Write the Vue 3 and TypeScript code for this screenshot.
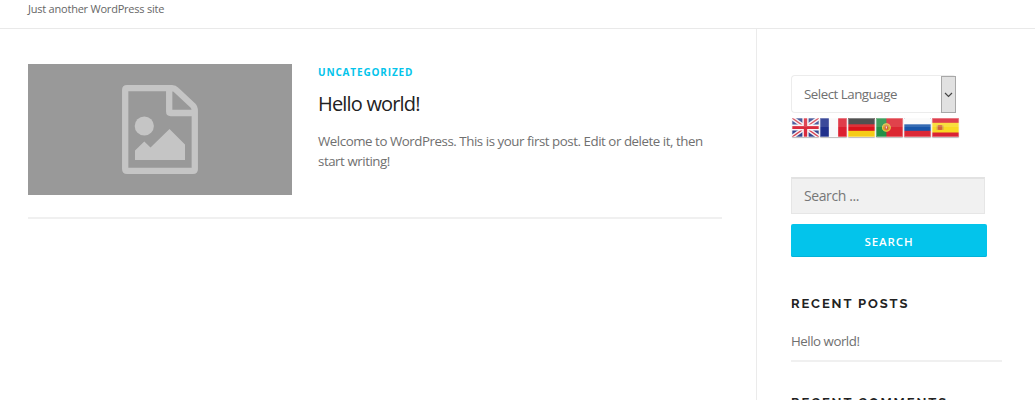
<script setup lang="ts">
interface Flag {
  code: string
  label: string
}

const flags: Flag[] = [
  { code: 'gb', label: 'English' },
  { code: 'fr', label: 'French' },
  { code: 'de', label: 'German' },
  { code: 'pt', label: 'Portuguese' },
  { code: 'ru', label: 'Russian' },
  { code: 'es', label: 'Spanish' },
]
</script>

<template>
  <div class="page">
    <header class="site-header">
      <p class="tagline">Just another WordPress site</p>
    </header>
    <div class="content">
      <main class="primary">
        <article class="post">
          <div class="thumb">
            <svg class="thumb-icon" width="76" height="89" viewBox="0 0 76 89">
              <path
                fill="none"
                stroke="#c5c5c5"
                stroke-width="6.3"
                stroke-linejoin="round"
                d="M5 3.2H50Q52.5 3.2 54.5 5.2L70.8 20.5Q72.8 22.5 72.8 26V84Q72.8 85.8 71 85.8H5Q3.2 85.8 3.2 84V5Q3.2 3.2 5 3.2ZM47.2 3.5V26.5Q47.2 28 48.7 28H72"
              />
              <circle cx="22.3" cy="41" r="9.6" fill="#c5c5c5" />
              <path fill="#c5c5c5" d="M13 75V65.5L22.3 56.5L28.5 62.5L47.5 44L63 59.5V75Z" />
            </svg>
          </div>
          <div class="entry">
            <a class="category">UNCATEGORIZED</a>
            <h2 class="title">Hello world!</h2>
            <p class="excerpt">
              <span class="line">Welcome to WordPress. This is your first post. Edit or delete it, then</span>
              <span class="line">start writing!</span>
            </p>
          </div>
        </article>
      </main>
      <aside class="sidebar">
        <div class="language">
          <span class="language-label">Select Language</span>
          <span class="language-arrow">
            <svg width="9" height="6" viewBox="0 0 9 6">
              <path d="M1 1L4.5 4.5L8 1" fill="none" stroke="#444" stroke-width="1.2" />
            </svg>
          </span>
        </div>
        <div class="flags">
          <svg
            v-for="flag in flags"
            :key="flag.code"
            class="flag"
            width="27"
            height="19"
            viewBox="0 0 26 19"
            preserveAspectRatio="none"
            role="img"
            :aria-label="flag.label"
          >
            <template v-if="flag.code === 'gb'">
              <rect width="26" height="19" fill="#33458f" />
              <path d="M0 0L26 19M26 0L0 19" stroke="#f3eff3" stroke-width="4.2" />
              <path d="M0 0L26 19M26 0L0 19" stroke="#d8414f" stroke-width="1.4" />
              <path d="M13 0V19M0 9.5H26" stroke="#f8f4f6" stroke-width="6" />
              <path d="M13 0V19M0 9.5H26" stroke="#d92b3c" stroke-width="3.2" />
            </template>
            <template v-else-if="flag.code === 'fr'">
              <rect width="26" height="19" fill="#f8f8fa" />
              <rect width="8.5" height="19" fill="#20308c" />
              <rect x="17.5" width="8.5" height="19" fill="#dc1f30" />
            </template>
            <template v-else-if="flag.code === 'de'">
              <rect width="26" height="19" fill="#f5cc16" />
              <rect width="26" height="12.8" fill="#d9141c" />
              <rect width="26" height="6.3" fill="#383838" />
            </template>
            <template v-else-if="flag.code === 'pt'">
              <rect width="26" height="19" fill="#dc2631" />
              <rect width="10" height="19" fill="#239047" />
              <circle cx="10" cy="9.5" r="3.8" fill="#d3a22b" stroke="#e9c84c" stroke-width="1" />
              <rect x="8.5" y="7.7" width="3" height="3.8" fill="#d94d40" />
              <rect x="9.4" y="8.5" width="1.2" height="2" fill="#e9e0dc" />
            </template>
            <template v-else-if="flag.code === 'ru'">
              <rect width="26" height="19" fill="#dc2836" />
              <rect width="26" height="12.8" fill="#1755a8" />
              <rect width="26" height="6.3" fill="#fafafa" />
            </template>
            <template v-else>
              <rect width="26" height="19" fill="#d92334" />
              <rect y="4.8" width="26" height="9.7" fill="#f9d923" />
              <rect x="5.5" y="7" width="4.5" height="5" rx="1" fill="#d46438" />
              <path d="M5 7.5V12M10.5 7.5V12" stroke="#c99a5c" stroke-width="1" />
            </template>
            <rect width="26" height="9" fill="#fff" opacity="0.13" />
            <rect x="0.5" y="0.5" width="25" height="18" fill="none" stroke="#fff" opacity="0.3" />
          </svg>
        </div>
        <form class="search" @submit.prevent>
          <input class="search-field" type="text" placeholder="Search ..." aria-label="Search" />
          <button class="search-button" type="submit">SEARCH</button>
        </form>
        <section class="widget">
          <h3 class="widget-title">RECENT POSTS</h3>
          <a class="recent-link">Hello world!</a>
        </section>
        <section class="widget comments">
          <h3 class="widget-title">RECENT COMMENTS</h3>
        </section>
      </aside>
    </div>
  </div>
</template>

<style>
body {
  margin: 0;
  background: #fff;
}
</style>

<style scoped>
.page {
  display: flex;
  flex-direction: column;
  width: 1035px;
  height: 400px;
  overflow: hidden;
  background: #fff;
  color: #707070;
  font-family: 'Open Sans', 'Noto Sans', sans-serif;
}
.site-header {
  box-sizing: border-box;
  flex: none;
  height: 29px;
  border-bottom: 1px solid #e9e9e9;
}
.tagline {
  margin: 0;
  padding-left: 28px;
  font-size: 11px;
  line-height: 18px;
  letter-spacing: -0.22px;
  color: #666;
}
.content {
  display: flex;
  flex: 1;
  min-height: 0;
}
.primary {
  box-sizing: border-box;
  width: 756px;
  padding: 35px 34px 0 28px;
}
.post {
  display: flex;
  box-sizing: border-box;
  height: 155px;
  border-bottom: 2px solid #f0f0f0;
}
.thumb {
  display: flex;
  flex: none;
  align-items: center;
  justify-content: center;
  width: 264px;
  height: 131px;
  background: #999;
}
.thumb-icon {
  display: block;
}
.entry {
  margin-left: 26px;
  white-space: nowrap;
}
.category {
  display: block;
  font-size: 10px;
  font-weight: 700;
  line-height: 16px;
  letter-spacing: 0.85px;
  color: #03c4eb;
}
.title {
  margin: 8px 0 0;
  font-size: 20px;
  font-weight: 400;
  line-height: 32px;
  letter-spacing: -0.82px;
  color: #222;
}
.excerpt {
  margin: 11px 0 0;
  font-size: 13.3px;
  line-height: 20px;
  letter-spacing: -0.45px;
}
.line {
  display: block;
}
.sidebar {
  box-sizing: border-box;
  width: 279px;
  padding: 46px 33px 0 34px;
  border-left: 1px solid #ebebeb;
}
.language {
  display: flex;
  justify-content: space-between;
  box-sizing: border-box;
  width: 165px;
  height: 38px;
  border: 1px solid #ececec;
  border-right: 0;
  border-radius: 4px;
}
.language-label {
  padding-left: 12px;
  font-size: 13.3px;
  line-height: 36px;
  letter-spacing: -0.48px;
}
.language-arrow {
  display: flex;
  align-items: center;
  justify-content: center;
  box-sizing: border-box;
  width: 15px;
  height: 37px;
  border: 1px solid #a8a8a8;
  background: #e1e1e1;
}
.flags {
  display: flex;
  gap: 1px;
  margin: 5px 0 0 1px;
}
.flag {
  display: block;
  border-radius: 1px;
  box-shadow: 0 1px 1px #bbb;
}
.search {
  display: flex;
  flex-direction: column;
  margin-top: 40px;
}
.search-field {
  box-sizing: border-box;
  width: 194px;
  height: 37px;
  margin: 0;
  padding: 0 12px 2px;
  border: 1px solid #e6e6e6;
  border-top: 2px solid #e2e2e2;
  border-radius: 0;
  background: #f1f1f1;
  color: #777;
  font-family: inherit;
  font-size: 14px;
  letter-spacing: -0.4px;
}
.search-field::placeholder {
  color: #777;
  opacity: 1;
}
.search-button {
  width: 196px;
  height: 33px;
  margin: 10px 0 0;
  padding: 0;
  border: 0;
  border-radius: 2px;
  background: #03c4eb;
  box-shadow: inset 0 -1px 0 #03b2d8;
  color: #fff;
  font-family: inherit;
  font-size: 11.5px;
  font-weight: 600;
  line-height: 35px;
  letter-spacing: 0.9px;
}
.widget {
  margin-top: 37px;
}
.widget-title {
  margin: 0;
  font-family: Raleway, 'Open Sans', sans-serif;
  font-size: 13px;
  font-weight: 700;
  line-height: 20px;
  letter-spacing: 1.9px;
  white-space: nowrap;
  color: #222;
}
.comments {
  margin-top: 31px;
}
.recent-link {
  display: block;
  box-sizing: border-box;
  width: 211px;
  height: 39px;
  margin-top: 9px;
  padding-top: 8px;
  border-bottom: 2px solid #f0f0f0;
  font-size: 13.3px;
  line-height: 20px;
  letter-spacing: -0.48px;
}
</style>
